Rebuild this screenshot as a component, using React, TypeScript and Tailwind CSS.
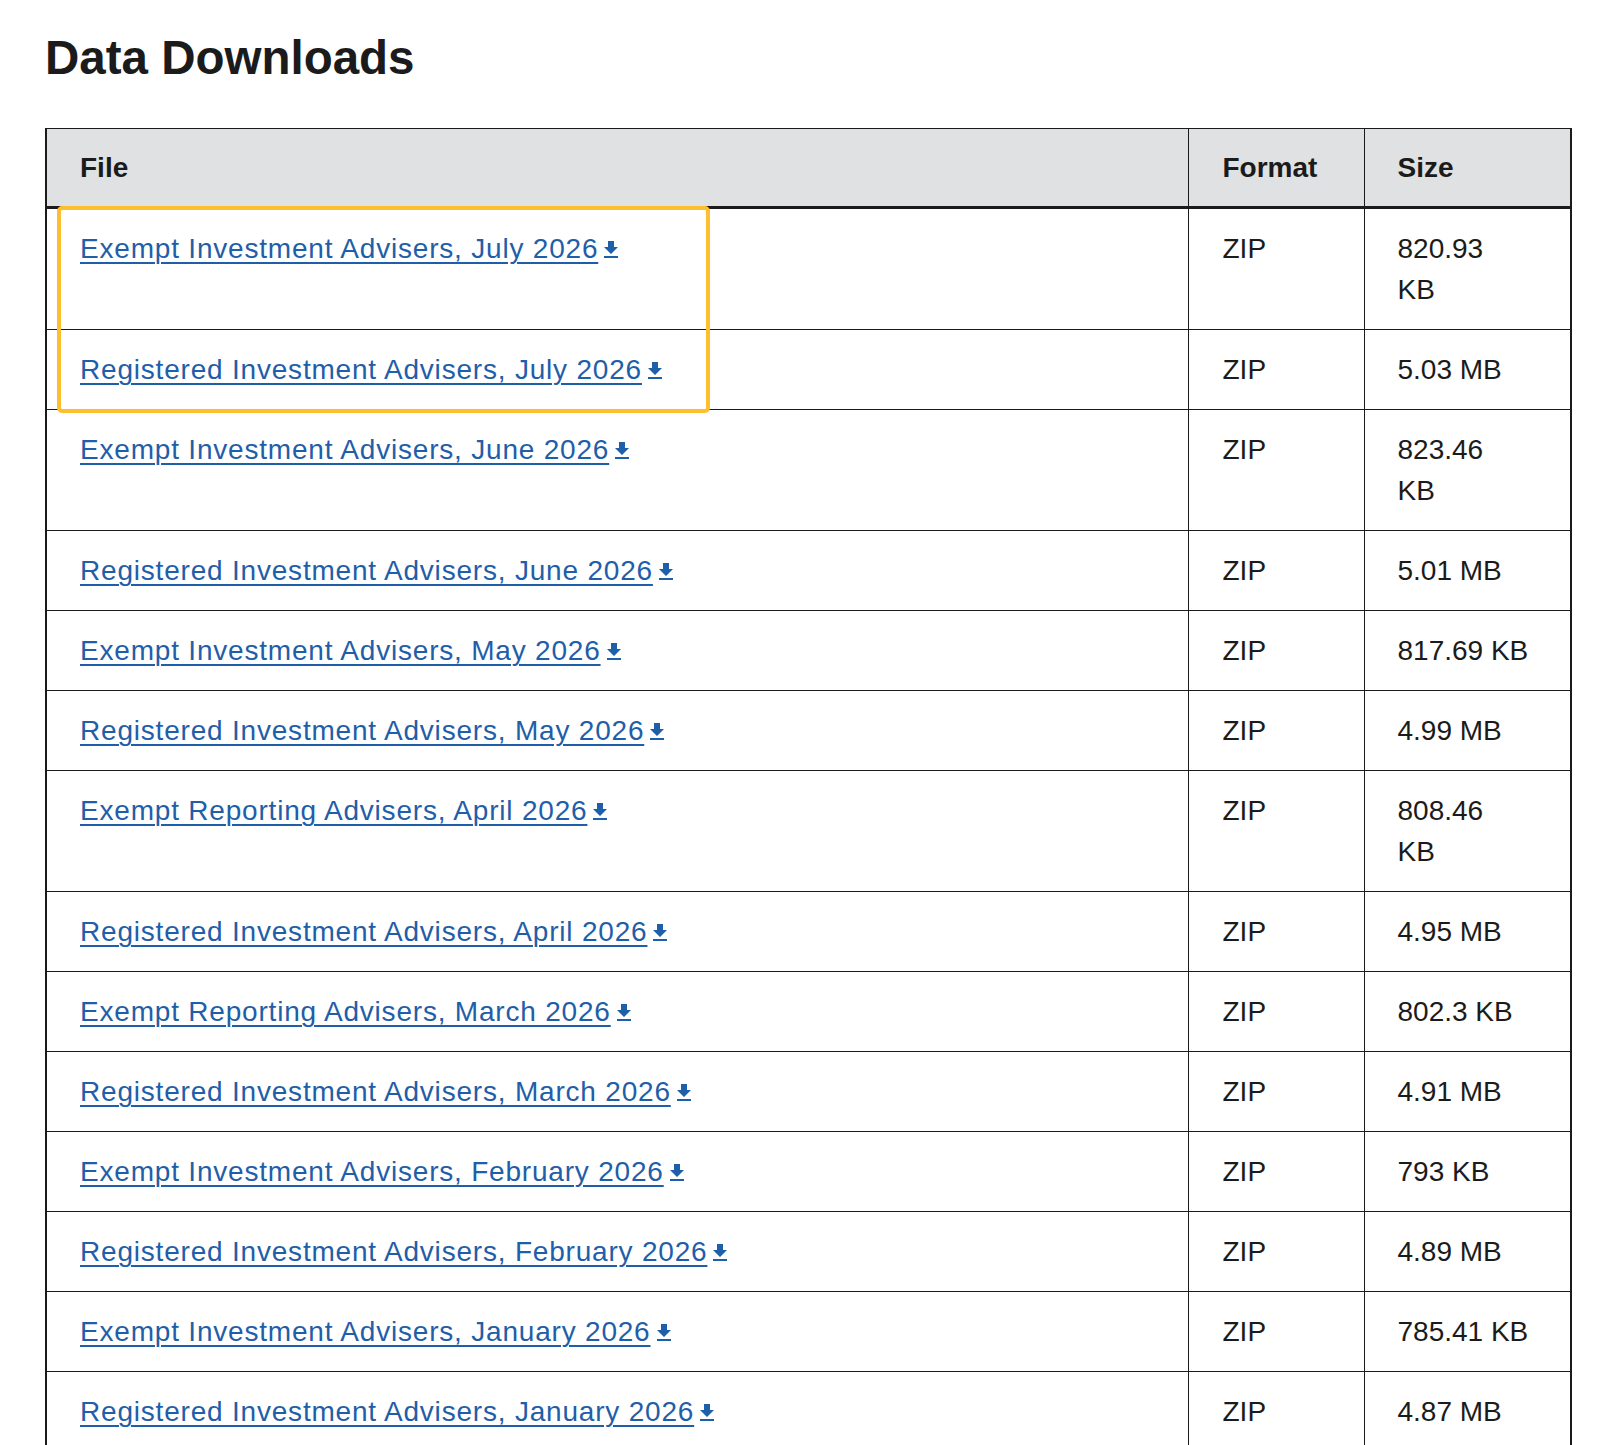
import React from "react";

type Download = {
  name: string;
  format: string;
  size: string;
};

const downloads: Download[] = [
  { name: "Exempt Investment Advisers, July 2026", format: "ZIP", size: "820.93\nKB" },
  { name: "Registered Investment Advisers, July 2026", format: "ZIP", size: "5.03 MB" },
  { name: "Exempt Investment Advisers, June 2026", format: "ZIP", size: "823.46\nKB" },
  { name: "Registered Investment Advisers, June 2026", format: "ZIP", size: "5.01 MB" },
  { name: "Exempt Investment Advisers, May 2026", format: "ZIP", size: "817.69 KB" },
  { name: "Registered Investment Advisers, May 2026", format: "ZIP", size: "4.99 MB" },
  { name: "Exempt Reporting Advisers, April 2026", format: "ZIP", size: "808.46\nKB" },
  { name: "Registered Investment Advisers, April 2026", format: "ZIP", size: "4.95 MB" },
  { name: "Exempt Reporting Advisers, March 2026", format: "ZIP", size: "802.3 KB" },
  { name: "Registered Investment Advisers, March 2026", format: "ZIP", size: "4.91 MB" },
  { name: "Exempt Investment Advisers, February 2026", format: "ZIP", size: "793 KB" },
  { name: "Registered Investment Advisers, February 2026", format: "ZIP", size: "4.89 MB" },
  { name: "Exempt Investment Advisers, January 2026", format: "ZIP", size: "785.41 KB" },
  { name: "Registered Investment Advisers, January 2026", format: "ZIP", size: "4.87 MB" },
];

function DownloadIcon() {
  return (
    <svg
      viewBox="5 3 14 17"
      className="inline-block w-[14px] h-[17px] ml-[6px] align-baseline fill-current"
      aria-hidden="true"
    >
      <path d="M19 9h-4V3H9v6H5l7 7 7-7zM5 18v2h14v-2H5z" />
    </svg>
  );
}

export default function App() {
  return (
    <div className="min-h-[1445px] bg-white text-[#1b1b1b] font-['Liberation_Sans',Arial,sans-serif] pt-[30px] pl-[45px]">
      {/* Heading */}
      <h1 className="text-[47.5px] leading-[56px] font-bold m-0">
        Data Downloads
      </h1>

      {/* Table */}
      <div className="relative mt-[42px] w-[1525px]">
        <table className="w-[1525px] table-fixed border-collapse text-[28px] leading-[41px]">
          <colgroup>
            <col className="w-[1142px]" />
            <col className="w-[176px]" />
            <col className="w-[207px]" />
          </colgroup>
          <thead>
            <tr className="bg-[#dfe1e2]">
              <th className="text-left font-bold py-[18px] pl-[33px] pr-[20px] border border-[#1b1b1b] border-b-[3px] border-l-2">
                File
              </th>
              <th className="text-left font-bold py-[18px] pl-[34px] pr-[10px] border border-[#1b1b1b] border-b-[3px]">
                Format
              </th>
              <th className="text-left font-bold py-[18px] pl-[33px] pr-[10px] border border-[#1b1b1b] border-b-[3px] border-r-2">
                Size
              </th>
            </tr>
          </thead>
          <tbody>
            {downloads.map((d) => (
              <tr key={d.name}>
                <td className="align-top py-[19px] pl-[33px] pr-[20px] border border-[#1b1b1b] border-l-2">
                  <a
                    href="#"
                    className="text-[#1f5ea8] underline decoration-[1.5px] underline-offset-[4px] tracking-[0.8px]"
                  >
                    {d.name}
                    <DownloadIcon />
                  </a>
                </td>
                <td className="align-top py-[19px] pl-[34px] pr-[10px] border border-[#1b1b1b]">
                  {d.format}
                </td>
                <td className="align-top py-[19px] pl-[33px] pr-[10px] border border-[#1b1b1b] border-r-2 whitespace-pre-line">
                  {d.size}
                </td>
              </tr>
            ))}
          </tbody>
        </table>

        {/* Focus ring over first two rows */}
        <div className="absolute left-[12px] top-[78px] w-[653px] h-[207px] border-[4px] border-[#ffbe2e] rounded-[5px] pointer-events-none" />
      </div>
    </div>
  );
}
